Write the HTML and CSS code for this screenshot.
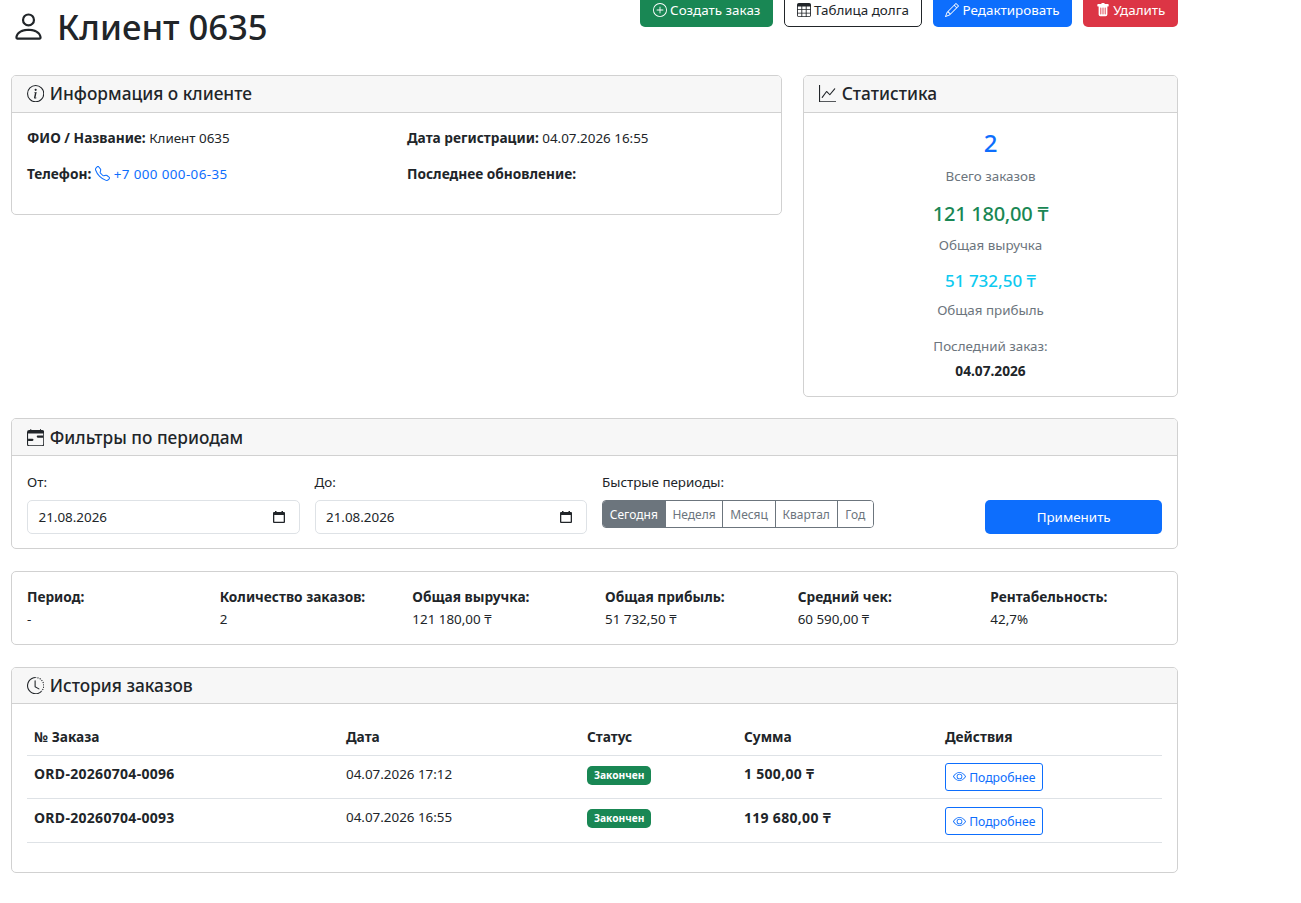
FILE: index.html
```html
<!DOCTYPE html>
<html lang="ru">
<head>
    <meta charset="UTF-8">
    <title>Клиент 0635</title>
    <link rel="stylesheet" href="styles.css">
</head>
<body>
    <div class="page">
        <div class="top-bar">
            <h1 class="title">
                <svg class="bi title-icon" viewBox="0 0 16 16"><path d="M8 8a3 3 0 1 0 0-6 3 3 0 0 0 0 6m2-3a2 2 0 1 1-4 0 2 2 0 0 1 4 0m4 8c0 1-1 1-1 1H3s-1 0-1-1 1-4 6-4 6 3 6 4m-1-.004c-.001-.246-.154-.986-.832-1.664C11.516 10.68 10.289 10 8 10s-3.516.68-4.168 1.332c-.678.678-.83 1.418-.832 1.664z"/></svg>
                Клиент 0635
            </h1>
            <div class="actions">
                <a class="btn btn-green"><svg class="bi" viewBox="0 0 16 16"><path d="M8 15A7 7 0 1 1 8 1a7 7 0 0 1 0 14m0 1A8 8 0 1 0 8 0a8 8 0 0 0 0 16"/><path d="M8 4a.5.5 0 0 1 .5.5v3h3a.5.5 0 0 1 0 1h-3v3a.5.5 0 0 1-1 0v-3h-3a.5.5 0 0 1 0-1h3v-3A.5.5 0 0 1 8 4"/></svg> Создать заказ</a>
                <a class="btn btn-dark-outline"><svg class="bi" viewBox="0 0 16 16"><path d="M0 2a2 2 0 0 1 2-2h12a2 2 0 0 1 2 2v12a2 2 0 0 1-2 2H2a2 2 0 0 1-2-2zm15 2h-4v3h4zm0 4h-4v3h4zm0 4h-4v3h3a1 1 0 0 0 1-1zm-5 3v-3H6v3zm-5 0v-3H1v2a1 1 0 0 0 1 1zm-4-4h4V8H1zm0-4h4V4H1zm5-3v3h4V4zm4 4H6v3h4z"/></svg> Таблица долга</a>
                <a class="btn btn-blue"><svg class="bi" viewBox="0 0 16 16"><path d="M12.146.146a.5.5 0 0 1 .708 0l3 3a.5.5 0 0 1 0 .708l-10 10a.5.5 0 0 1-.168.11l-5 2a.5.5 0 0 1-.65-.65l2-5a.5.5 0 0 1 .11-.168zM11.207 2.5 13.5 4.793 14.793 3.5 12.5 1.207zm1.586 3L10.5 3.207 4 9.707V10h.5a.5.5 0 0 1 .5.5v.5h.5a.5.5 0 0 1 .5.5v.5h.293zm-9.761 5.175-.106.106-1.528 3.821 3.821-1.528.106-.106A.5.5 0 0 1 5 12.5V12h-.5a.5.5 0 0 1-.5-.5V11h-.5a.5.5 0 0 1-.468-.325"/></svg> Редактировать</a>
                <a class="btn btn-red"><svg class="bi" viewBox="0 0 16 16"><path d="M2.5 1a1 1 0 0 0-1 1v1a1 1 0 0 0 1 1H3v9a2 2 0 0 0 2 2h6a2 2 0 0 0 2-2V4h.5a1 1 0 0 0 1-1V2a1 1 0 0 0-1-1H10a1 1 0 0 0-1-1H7a1 1 0 0 0-1 1zm3 4a.5.5 0 0 1 .5.5v7a.5.5 0 0 1-1 0v-7a.5.5 0 0 1 .5-.5M8 5a.5.5 0 0 1 .5.5v7a.5.5 0 0 1-1 0v-7A.5.5 0 0 1 8 5m3 .5v7a.5.5 0 0 1-1 0v-7a.5.5 0 0 1 1 0"/></svg> Удалить</a>
            </div>
        </div>

        <div class="info-row">
            <div class="card info-card">
                <div class="card-header">
                    <svg class="bi" viewBox="0 0 16 16"><path d="M8 15A7 7 0 1 1 8 1a7 7 0 0 1 0 14m0 1A8 8 0 1 0 8 0a8 8 0 0 0 0 16"/><path d="m8.93 6.588-2.29.287-.082.38.45.083c.294.07.352.176.288.469l-.738 3.468c-.194.897.105 1.319.808 1.319.545 0 1.178-.252 1.465-.598l.088-.416c-.2.176-.492.246-.686.246-.275 0-.375-.193-.304-.533zM9 4.5a1 1 0 1 1-2 0 1 1 0 0 1 2 0"/></svg>
                    Информация о клиенте
                </div>
                <div class="card-body info-grid">
                    <p><b>ФИО / Название:</b> Клиент 0635</p>
                    <p><b>Дата регистрации:</b> 04.07.2026 16:55</p>
                    <p><b>Телефон:</b> <a class="link"><svg class="bi" viewBox="0 0 16 16"><path d="M3.654 1.328a.678.678 0 0 0-1.015-.063L1.605 2.3c-.483.484-.661 1.169-.45 1.77a17.6 17.6 0 0 0 4.168 6.608 17.6 17.6 0 0 0 6.608 4.168c.601.211 1.286.033 1.77-.45l1.034-1.034a.678.678 0 0 0-.063-1.015l-2.307-1.794a.68.68 0 0 0-.58-.122l-2.19.547a1.75 1.75 0 0 1-1.657-.459L5.482 8.062a1.75 1.75 0 0 1-.46-1.657l.548-2.19a.68.68 0 0 0-.122-.58zM1.884.511a1.745 1.745 0 0 1 2.612.163L6.29 2.98c.329.423.445.974.315 1.494l-.547 2.19a.68.68 0 0 0 .178.643l2.457 2.457a.68.68 0 0 0 .644.178l2.189-.547a1.75 1.75 0 0 1 1.494.315l2.306 1.794c.829.645.905 1.87.163 2.611l-1.034 1.034c-.74.74-1.846 1.065-2.877.702a18.6 18.6 0 0 1-7.01-4.42 18.6 18.6 0 0 1-4.42-7.009c-.362-1.03-.037-2.137.703-2.877z"/></svg> +7 000 000-06-35</a></p>
                    <p><b>Последнее обновление:</b></p>
                </div>
            </div>

            <div class="card stats-card">
                <div class="card-header">
                    <svg class="bi" viewBox="0 0 16 16"><path d="M0 0h1v15h15v1H0zm14.817 3.113a.5.5 0 0 1 .07.704l-4.5 5.5a.5.5 0 0 1-.74.037L7.06 6.767l-3.656 5.027a.5.5 0 0 1-.808-.588l4-5.5a.5.5 0 0 1 .758-.06l2.609 2.61 4.15-5.073a.5.5 0 0 1 .704-.07"/></svg>
                    Статистика
                </div>
                <div class="stats-body">
                    <div class="stat stat-orders">2</div>
                    <div class="stat-label">Всего заказов</div>
                    <div class="stat stat-revenue">121 180,00 ₸</div>
                    <div class="stat-label">Общая выручка</div>
                    <div class="stat stat-profit">51 732,50 ₸</div>
                    <div class="stat-label">Общая прибыль</div>
                    <div class="stat-label stat-last">Последний заказ:</div>
                    <div class="stat-date">04.07.2026</div>
                </div>
            </div>
        </div>

        <div class="card filters-card">
            <div class="card-header">
                <svg class="bi" viewBox="0 0 16 16"><path d="M9 7a1 1 0 0 1 1-1h5v2h-5a1 1 0 0 1-1-1M1 9h4a1 1 0 0 1 0 2H1z"/><path d="M3.5 0a.5.5 0 0 1 .5.5V1h8V.5a.5.5 0 0 1 1 0V1h1a2 2 0 0 1 2 2v11a2 2 0 0 1-2 2H2a2 2 0 0 1-2-2V3a2 2 0 0 1 2-2h1V.5a.5.5 0 0 1 .5-.5M1 4v10a1 1 0 0 0 1 1h12a1 1 0 0 0 1-1V4z"/><path d="M1 2h14v2H1z"/></svg>
                Фильтры по периодам
            </div>
            <div class="filters-body">
                <div class="field">
                    <label>От:</label>
                    <div class="date-input">21.08.2026 <svg class="cal" viewBox="0 0 14 14"><path d="M3 1h1.5v1h5V1H11v1h1a1 1 0 0 1 1 1v9a1 1 0 0 1-1 1H2a1 1 0 0 1-1-1V3a1 1 0 0 1 1-1h1zM2.3 5v6.7h9.4V5z"/></svg></div>
                </div>
                <div class="field">
                    <label>До:</label>
                    <div class="date-input">21.08.2026 <svg class="cal" viewBox="0 0 14 14"><path d="M3 1h1.5v1h5V1H11v1h1a1 1 0 0 1 1 1v9a1 1 0 0 1-1 1H2a1 1 0 0 1-1-1V3a1 1 0 0 1 1-1h1zM2.3 5v6.7h9.4V5z"/></svg></div>
                </div>
                <div class="field">
                    <label>Быстрые периоды:</label>
                    <div class="btn-group">
                        <button class="active">Сегодня</button>
                        <button>Неделя</button>
                        <button>Месяц</button>
                        <button>Квартал</button>
                        <button>Год</button>
                    </div>
                </div>
                <button class="apply">Применить</button>
            </div>
        </div>

        <div class="card summary-card">
            <div class="summary-item"><b>Период:</b><span>-</span></div>
            <div class="summary-item"><b>Количество заказов:</b><span>2</span></div>
            <div class="summary-item"><b>Общая выручка:</b><span>121 180,00 ₸</span></div>
            <div class="summary-item"><b>Общая прибыль:</b><span>51 732,50 ₸</span></div>
            <div class="summary-item"><b>Средний чек:</b><span>60 590,00 ₸</span></div>
            <div class="summary-item"><b>Рентабельность:</b><span>42,7%</span></div>
        </div>

        <div class="card history-card">
            <div class="card-header">
                <svg class="bi" viewBox="0 0 16 16"><path d="M8.515 1.019A7 7 0 0 0 8 1V0a8 8 0 0 1 .589.022zm2.004.45a7 7 0 0 0-.985-.299l.219-.976q.576.129 1.126.342zm1.37.71a7 7 0 0 0-.439-.27l.493-.87a8 8 0 0 1 .979.654l-.615.789a7 7 0 0 0-.418-.302zm1.834 1.79a7 7 0 0 0-.653-.796l.724-.69q.406.429.747.91zm.744 1.352a7 7 0 0 0-.214-.468l.893-.45a8 8 0 0 1 .45 1.088l-.95.313a7 7 0 0 0-.179-.483m.53 2.507a7 7 0 0 0-.1-1.025l.985-.17q.1.58.116 1.17zm-.131 1.538q.05-.254.081-.51l.993.123a8 8 0 0 1-.23 1.155l-.964-.267q.069-.247.12-.501m-.952 2.379q.276-.436.486-.908l.914.405q-.24.54-.555 1.038zm-.964 1.205q.183-.183.35-.378l.758.653a8 8 0 0 1-.401.432z"/><path d="M8 1a7 7 0 1 0 4.95 11.95l.707.707A8.001 8.001 0 1 1 8 0z"/><path d="M7.5 3a.5.5 0 0 1 .5.5v5.21l3.248 1.856a.5.5 0 0 1-.496.868l-3.5-2A.5.5 0 0 1 7 9V3.5a.5.5 0 0 1 .5-.5"/></svg>
                История заказов
            </div>
            <div class="history-body">
                <table>
                    <thead>
                        <tr><th>№ Заказа</th><th>Дата</th><th>Статус</th><th>Сумма</th><th>Действия</th></tr>
                    </thead>
                    <tbody>
                        <tr>
                            <td><b>ORD-20260704-0096</b></td>
                            <td>04.07.2026 17:12</td>
                            <td><span class="badge">Закончен</span></td>
                            <td><b>1 500,00 ₸</b></td>
                            <td><a class="btn-details"><svg class="bi" viewBox="0 0 16 16"><path d="M16 8s-3-5.5-8-5.5S0 8 0 8s3 5.5 8 5.5S16 8 16 8M1.173 8a13 13 0 0 1 1.66-2.043C4.12 4.668 5.88 3.5 8 3.5s3.879 1.168 5.168 2.457A13 13 0 0 1 14.828 8q-.086.13-.195.288c-.335.48-.83 1.12-1.465 1.755C11.879 11.332 10.119 12.5 8 12.5s-3.879-1.168-5.168-2.457A13 13 0 0 1 1.172 8z"/><path d="M8 5.5a2.5 2.5 0 1 0 0 5 2.5 2.5 0 0 0 0-5M4.5 8a3.5 3.5 0 1 1 7 0 3.5 3.5 0 0 1-7 0"/></svg> Подробнее</a></td>
                        </tr>
                        <tr>
                            <td><b>ORD-20260704-0093</b></td>
                            <td>04.07.2026 16:55</td>
                            <td><span class="badge">Закончен</span></td>
                            <td><b>119 680,00 ₸</b></td>
                            <td><a class="btn-details"><svg class="bi" viewBox="0 0 16 16"><path d="M16 8s-3-5.5-8-5.5S0 8 0 8s3 5.5 8 5.5S16 8 16 8M1.173 8a13 13 0 0 1 1.66-2.043C4.12 4.668 5.88 3.5 8 3.5s3.879 1.168 5.168 2.457A13 13 0 0 1 14.828 8q-.086.13-.195.288c-.335.48-.83 1.12-1.465 1.755C11.879 11.332 10.119 12.5 8 12.5s-3.879-1.168-5.168-2.457A13 13 0 0 1 1.172 8z"/><path d="M8 5.5a2.5 2.5 0 1 0 0 5 2.5 2.5 0 0 0 0-5M4.5 8a3.5 3.5 0 1 1 7 0 3.5 3.5 0 0 1-7 0"/></svg> Подробнее</a></td>
                        </tr>
                    </tbody>
                </table>
            </div>
        </div>
    </div>
</body>
</html>
```

FILE: styles.css
```css
* {
    box-sizing: border-box;
}

html, body {
    height: 903px;
    overflow: hidden;
}

body {
    margin: 0;
    background-color: #fff;
    color: #212529;
    font-family: "Noto Sans", "Open Sans", sans-serif;
    font-size: 13.4px;
    line-height: 21px;
}

.page {
    width: 1167px;
    margin-left: 11px;
}

b {
    font-size: 13.7px;
    font-weight: 700;
}

.bi {
    width: 1em;
    height: 1em;
    fill: currentColor;
    vertical-align: -0.125em;
}

/* header */
.top-bar {
    display: flex;
    justify-content: space-between;
    align-items: flex-start;
    height: 75px;
}

.title {
    margin: 5px 0 0;
    font-size: 34.6px;
    font-weight: 500;
    line-height: 44px;
}

.title-icon {
    margin-right: 2px;
    font-size: 35px;
    vertical-align: -4px;
}

.actions {
    display: flex;
    gap: 11px;
    margin-top: -11px;
}

.btn {
    display: block;
    height: 38px;
    padding: 10px 11.6px 0;
    border: 1px solid transparent;
    border-radius: 5px;
    line-height: 20px;
}

.btn .bi {
    width: 14px;
    height: 14px;
}

.btn-green {
    background-color: #198754;
    color: #fff;
}

.btn-dark-outline {
    border-color: #212529;
    color: #212529;
}

.btn-blue {
    background-color: #0d6efd;
    color: #fff;
}

.btn-red {
    background-color: #dc3545;
    color: #fff;
}

/* cards */
.card {
    border: 1px solid #d1d1d1;
    border-radius: 5px;
    background-color: #fff;
}

.card-header {
    height: 37px;
    padding: 0 15px;
    border-bottom: 1px solid #d1d1d1;
    border-radius: 4px 4px 0 0;
    background-color: #f7f7f7;
    font-size: 17.3px;
    font-weight: 500;
    line-height: 36px;
}

.card-header .bi {
    margin-right: 1px;
}

.info-row {
    display: flex;
    gap: 21px;
    align-items: flex-start;
}

.info-card {
    width: 771px;
    height: 140px;
}

.info-grid {
    display: grid;
    grid-template-columns: 1fr 1fr;
    column-gap: 21px;
    row-gap: 14px;
    padding: 14px 15px;
}

.info-grid p {
    margin: 0;
}

.link {
    color: #0d6efd;
    letter-spacing: 0.4px;
}

.link .bi {
    width: 15px;
    height: 15px;
}

.stats-card {
    width: 375px;
    height: 322px;
}

.stats-body {
    padding: 14px 15px 0;
    text-align: center;
}

.stat {
    font-weight: 500;
}

.stat-orders {
    height: 32px;
    color: #0d6efd;
    font-size: 24px;
    line-height: 32px;
}

.stat-label {
    margin-top: 7px;
    margin-bottom: 13px;
    color: #6c757d;
}

.stat-revenue {
    color: #198754;
    font-size: 20px;
    letter-spacing: -0.25px;
    line-height: 28px;
}

.stat-profit {
    color: #0dcaf0;
    font-size: 17px;
    line-height: 24px;
}

.stat-last {
    margin-top: 15px;
    margin-bottom: 3px;
}

.stat-date {
    font-size: 13.7px;
    font-weight: 700;
}

.filters-card {
    height: 131px;
    margin-top: 21px;
}

.filters-card .card-header {
    padding-top: 1px;
}

.filters-body {
    display: grid;
    grid-template-columns: 272.5px 272.5px 368.33px 176.67px;
    column-gap: 15px;
    align-items: end;
    padding: 15px;
}

.field label {
    display: block;
    margin-bottom: 7px;
    padding-top: 1px;
}

.date-input {
    display: flex;
    align-items: center;
    justify-content: space-between;
    height: 34px;
    padding: 0 13px 0 10.5px;
    border: 1px solid #dee2e6;
    border-radius: 5px;
}

.cal {
    width: 14px;
    height: 14px;
    fill: #212529;
}

.btn-group {
    display: inline-flex;
    height: 28px;
    margin-bottom: 6px;
    border: 1px solid #6c757d;
    border-radius: 4px;
    overflow: hidden;
}

.btn-group button {
    padding: 0 6.8px;
    border: none;
    border-left: 1px solid #6c757d;
    background-color: #fff;
    color: #6c757d;
    font: inherit;
    font-size: 12px;
}

.btn-group button:first-child {
    border-left: none;
}

.btn-group button:last-child {
    padding: 0 7.6px;
}

.btn-group .active {
    background-color: #6c757d;
    color: #fff;
}

.apply {
    height: 34px;
    border: none;
    border-radius: 5px;
    background-color: #0d6efd;
    color: #fff;
    font: inherit;
}

.summary-card {
    display: grid;
    grid-template-columns: repeat(6, 1fr);
    column-gap: 21px;
    height: 74px;
    margin-top: 22px;
    padding: 14px 15px;
}

.summary-item b,
.summary-item span {
    display: block;
}

.summary-item span {
    margin-top: 2px;
}

.history-card {
    height: 206px;
    margin-top: 22px;
}

.history-card .card-header {
    height: 36px;
}

.history-body {
    padding: 15px;
}

table {
    width: 1135px;
    border-collapse: collapse;
    table-layout: fixed;
}

th:nth-child(1) { width: 312px; }
th:nth-child(2) { width: 241px; }
th:nth-child(3) { width: 157px; }
th:nth-child(4) { width: 201px; }
th:nth-child(5) { width: 224px; }

th {
    height: 36px;
    padding: 0 7px;
    border-bottom: 1px solid #dee2e6;
    font-size: 13.7px;
    font-weight: 700;
    text-align: left;
}

td {
    padding: 0 7px 5px;
    border-bottom: 1px solid #dee2e6;
}

tbody tr {
    height: 43px;
}

tbody tr:last-child {
    height: 44px;
}

td b {
    font-size: 14px;
    letter-spacing: 0.3px;
}

.badge {
    display: inline-block;
    height: 19px;
    padding: 0 7px;
    border-radius: 5px;
    background-color: #198754;
    color: #fff;
    font-size: 10.2px;
    font-weight: 700;
    line-height: 19px;
}

.btn-details {
    display: inline-block;
    height: 28px;
    margin-top: 5px;
    padding: 0 7px;
    border: 1px solid #0d6efd;
    border-radius: 3px;
    color: #0d6efd;
    font-size: 12.2px;
    line-height: 27px;
}

tbody tr:last-child .btn-details {
    margin-top: 7px;
}

.btn-details .bi {
    width: 13px;
    height: 13px;
}
```
